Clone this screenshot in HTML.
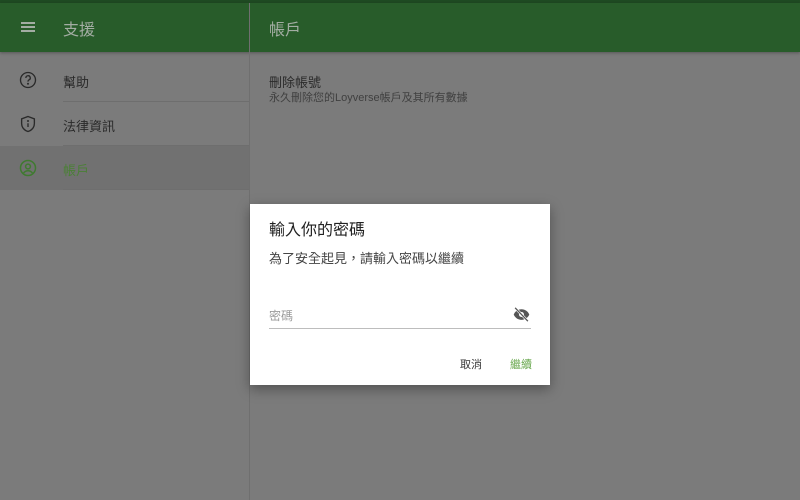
<!DOCTYPE html>
<html><head><meta charset="utf-8">
<style>
*{margin:0;padding:0;box-sizing:border-box}
body{width:800px;height:500px;overflow:hidden;background:#7b7b7b;font-family:"Liberation Sans","Noto Sans CJK TC",sans-serif;position:relative}
.top{position:absolute;left:0;top:0;width:800px;height:3px;background:#1f4a22}
.hdr{position:absolute;left:0;top:3px;width:800px;height:49px;background:#285c2a;box-shadow:0 1px 3px rgba(0,0,0,.3)}
.vdiv{position:absolute;left:249px;top:3px;width:1px;height:497px;background:#6f6f6f}
.hvd{position:absolute;left:249px;top:0;width:1px;height:49px;background:#22502a}
.t{position:absolute;color:#a3ada3;font-size:16px}
.item{position:absolute;left:0;width:249px;height:44px}
.item .lbl{position:absolute;left:63px;top:14px;font-size:13px;color:#2a2a2a}
.item .ln{position:absolute;left:63px;right:0;bottom:0;height:1px;background:#6e6e6e}
.item svg{position:absolute;left:19px;top:13px}
.dlg{position:absolute;left:250px;top:204px;width:300px;height:181px;background:#fff;box-shadow:0 4px 12px rgba(0,0,0,.35)}
</style></head><body>
<div class="top"></div>
<div class="hdr">
 <div class="hvd"></div>
 <div style="position:absolute;left:21px;top:19px;width:14px;height:2px;background:#a3ada3;box-shadow:0 4px 0 #a3ada3,0 8px 0 #a3ada3"></div>
 <div class="t" style="left:63px;top:13px">支援</div>
 <div class="t" style="left:269px;top:13px">帳戶</div>
</div>
<div class="vdiv"></div>
<div class="item" style="top:58px"><svg width="18" height="18" viewBox="0 0 24 24" fill="none" stroke="#2a2a2a" stroke-width="1.8"><circle cx="12" cy="12" r="10"/><path d="M9.2 9.3a2.9 2.9 0 1 1 4 2.6c-.8.4-1.2 1-1.2 1.9v.4"/><circle cx="12" cy="17" r=".5" fill="#2a2a2a"/></svg><div class="lbl">幫助</div><div class="ln"></div></div>
<div class="item" style="top:102px"><svg width="18" height="18" viewBox="0 0 24 24" fill="none" stroke="#2a2a2a" stroke-width="1.8"><path d="M12 2l8.5 3.2v6.3c0 5-3.6 9.2-8.5 10.5-4.9-1.3-8.5-5.5-8.5-10.5V5.2z"/><path d="M12 11v5"/><circle cx="12" cy="8" r=".5" fill="#2a2a2a"/></svg><div class="lbl">法律資訊</div><div class="ln"></div></div>
<div class="item" style="top:146px;background:#717171"><svg width="18" height="18" viewBox="0 0 24 24" fill="none" stroke="#3f7a30" stroke-width="2"><circle cx="12" cy="12" r="10"/><circle cx="12" cy="10" r="3.2"/><path d="M6 18.8c1.6-2.1 3.6-3.2 6-3.2s4.4 1.1 6 3.2"/></svg><div class="lbl" style="color:#4a8035">帳戶</div><div class="ln"></div></div>
<div style="position:absolute;left:269px;top:72px;font-size:13px;color:#2a2a2a">刪除帳號</div>
<div style="position:absolute;left:269px;top:89px;font-size:11px;color:#404040">永久刪除您的Loyverse帳戶及其所有數據</div>
<div class="dlg">
 <div style="position:absolute;left:19px;top:12px;font-size:16px;color:#212121">輸入你的密碼</div>
 <div style="position:absolute;left:19px;top:44px;font-size:13px;color:#444">為了安全起見，請輸入密碼以繼續</div>
 <div style="position:absolute;left:19px;top:103px;font-size:12px;color:#9a9a9a">密碼</div>
 <svg style="position:absolute;left:262px;top:102px" width="19" height="17" viewBox="0 0 24 24"><path fill="#555" d="M12 4.5C7 4.5 2.7 7.6 1 12c1.7 4.4 6 7.5 11 7.5s9.3-3.1 11-7.5c-1.7-4.4-6-7.5-11-7.5z"/><circle cx="12" cy="12" r="3.5" fill="#fff"/><path d="M3 2.5l18 19" stroke="#fff" stroke-width="3.5"/><path d="M3 2.5l18 19" stroke="#555" stroke-width="1.8"/></svg>
 <div style="position:absolute;left:19px;top:124px;width:262px;height:1px;background:#bdbdbd"></div>
 <div style="position:absolute;left:210px;top:152px;font-size:11px;color:#333">取消</div>
 <div style="position:absolute;left:260px;top:152px;font-size:11px;color:#6aa84f">繼續</div>
</div>
</body></html>
